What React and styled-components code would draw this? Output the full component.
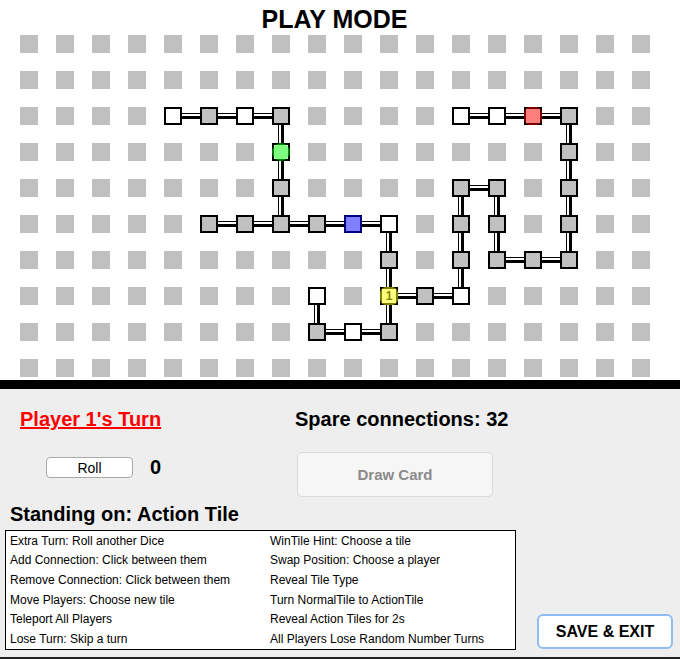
import React from 'react'
import styled, { createGlobalStyle } from 'styled-components'

const COLS = 18
const ROWS = 10

const WHITE = ['4,2', '6,2', '10,5', '8,7', '9,8', '12,7', '12,2', '13,2', '7,3', '9,5', '10,7', '14,2']
const GRAY = [
    '5,2', '7,2', '7,4', '5,5', '6,5', '7,5', '8,5', '10,6', '11,7', '8,8', '10,8',
    '12,6', '12,5', '12,4', '13,4', '13,5', '13,6', '14,6', '15,6', '15,5', '15,4', '15,3', '15,2',
]
const H_LINKS = ['4,2', '5,2', '6,2', '5,5', '6,5', '7,5', '8,5', '9,5', '8,8', '9,8', '10,7', '11,7', '12,4', '13,6', '14,6', '12,2', '13,2', '14,2']
const V_LINKS = ['7,2', '7,3', '7,4', '10,5', '10,6', '10,7', '8,7', '12,4', '12,5', '12,6', '13,4', '13,5', '15,2', '15,3', '15,4', '15,5']

const TOKENS = {
    '7,3': { color: 'rgba(0,255,0,0.5)', radius: '50%' },
    '9,5': { color: 'rgba(0,0,255,0.5)', radius: '3px' },
    '10,7': { color: 'rgba(255,255,0,0.5)', radius: '6px', label: '1' },
    '14,2': { color: 'rgba(255,0,0,0.5)', radius: '6px' },
}

const CARDS_LEFT = [
    'Extra Turn: Roll another Dice',
    'Add Connection: Click between them',
    'Remove Connection: Click between them',
    'Move Players: Choose new tile',
    'Teleport All Players',
    'Lose Turn: Skip a turn',
]
const CARDS_RIGHT = [
    'WinTile Hint: Choose a tile',
    'Swap Position: Choose a player',
    'Reveal Tile Type',
    'Turn NormalTile to ActionTile',
    'Reveal Action Tiles for 2s',
    'All Players Lose Random Number Turns',
]

const kindOf = (key) => {
    if (WHITE.includes(key)) return 'white'
    if (GRAY.includes(key)) return 'gray'
    return 'empty'
}

const App = () => {
    const cells = []
    for (let r = 0; r < ROWS; r++) {
        for (let c = 0; c < COLS; c++) {
            const key = `${c},${r}`
            const token = TOKENS[key]
            cells.push(
                <Cell key={key}>
                    <Tile $kind={kindOf(key)}>
                        {token && token.label && <TileLabel>{token.label}</TileLabel>}
                        {token && <Token $color={token.color} $radius={token.radius} />}
                    </Tile>
                    {H_LINKS.includes(key) ? <HLink /> : <span />}
                    {V_LINKS.includes(key) ? <VLink /> : <span />}
                </Cell>
            )
        }
    }

    return (
        <Page>
            <GlobalStyle />
            <Board>
                <Title>PLAY MODE</Title>
                <Grid>{cells}</Grid>
            </Board>
            <Panel>
                <TopGrid>
                    <Turn>Player 1's Turn</Turn>
                    <Spare>Spare connections: 32</Spare>
                    <RollRow>
                        <RollButton>Roll</RollButton>
                        <Dice>0</Dice>
                    </RollRow>
                    <DrawButton disabled>Draw Card</DrawButton>
                </TopGrid>
                <Standing>Standing on: Action Tile</Standing>
                <BottomRow>
                    <CardBox>
                        {CARDS_LEFT.map((text, i) => (
                            <React.Fragment key={text}>
                                <CardText>{text}</CardText>
                                <CardText>{CARDS_RIGHT[i]}</CardText>
                            </React.Fragment>
                        ))}
                    </CardBox>
                    <SaveButton>SAVE &amp; EXIT</SaveButton>
                </BottomRow>
            </Panel>
        </Page>
    )
}

const GlobalStyle = createGlobalStyle`
    html, body {
        margin: 0;
        padding: 0;
        background: #fff;
    }
    body {
        font-family: "Liberation Sans", Arial, sans-serif;
        color: #000;
    }
`
const Page = styled.div`
    width: 680px;
    height: 659px;
    display: flex;
    flex-direction: column;
    overflow: hidden;
`
const Board = styled.section`
    height: 389px;
    box-sizing: border-box;
    border-bottom: 9px solid #000;
    overflow: hidden;
    display: flex;
    flex-direction: column;
`
const Title = styled.h1`
    margin: 0;
    padding-top: 3px;
    padding-right: 11px;
    height: 32px;
    line-height: 32px;
    font-size: 25px;
    font-weight: 700;
    text-align: center;
`
const Grid = styled.div`
    display: grid;
    grid-template-columns: repeat(${COLS}, 36px);
    grid-auto-rows: 36px;
    padding-left: 20px;
`
const Cell = styled.div`
    display: grid;
    grid-template-columns: 18px 18px;
    grid-template-rows: 18px 18px;
`
const Tile = styled.div`
    position: relative;
    box-sizing: border-box;
    width: 18px;
    height: 18px;
    background: ${p => (p.$kind === 'white' ? '#fff' : '#c0c0c0')};
    border: ${p => (p.$kind === 'empty' ? 'none' : '2px solid #000')};
    z-index: 1;
`
const TileLabel = styled.span`
    position: absolute;
    inset: 0;
    display: flex;
    align-items: center;
    justify-content: center;
    font-size: 12px;
    font-weight: 700;
    color: #000;
`
const Token = styled.div`
    position: absolute;
    left: -2px;
    top: -2px;
    width: 18px;
    height: 18px;
    border-radius: ${p => p.$radius};
    background: ${p => p.$color};
`
const HLink = styled.div`
    background: linear-gradient(to bottom,
        transparent 0 6px, #000 6px 7px, #fff 7px 9px, #000 9px 12px, transparent 12px);
`
const VLink = styled.div`
    grid-column: 1;
    background: linear-gradient(to right,
        transparent 0 6px, #000 6px 7px, #fff 7px 9px, #000 9px 12px, transparent 12px);
`
const Panel = styled.section`
    flex: 1;
    background: #eeeeee;
    border-bottom: 2px solid #222;
    padding-top: 19px;
    display: flex;
    flex-direction: column;
`
const TopGrid = styled.div`
    display: grid;
    grid-template-columns: 275px 1fr;
    grid-template-rows: 22px 45px;
    row-gap: 22px;
    padding-left: 20px;
    align-items: start;
`
const Turn = styled.div`
    font-size: 20px;
    line-height: 22px;
    font-weight: 700;
    color: #ff0000;
    text-decoration: underline;
`
const Spare = styled.div`
    font-size: 20px;
    line-height: 22px;
    font-weight: 700;
`
const RollRow = styled.div`
    display: flex;
    align-items: center;
    gap: 17px;
    margin-left: 26px;
    margin-top: 4px;
`
const RollButton = styled.button`
    width: 87px;
    height: 21px;
    padding: 0;
    background: #fff;
    border: 1px solid #a8a8a8;
    border-radius: 4px;
    font-family: "Liberation Sans", Arial, sans-serif;
    font-size: 14px;
    color: #000;
`
const Dice = styled.span`
    font-size: 20px;
    font-weight: 700;
`
const DrawButton = styled.button`
    width: 196px;
    height: 45px;
    margin-left: 2px;
    background: #f6f6f6;
    border: 1px solid #d9d9d9;
    border-radius: 5px;
    font-family: "Liberation Sans", Arial, sans-serif;
    font-size: 15px;
    font-weight: 700;
    color: #8a8a8a;
`
const Standing = styled.h2`
    margin: 5px 0 0 10px;
    font-size: 20px;
    line-height: 24px;
    font-weight: 700;
`
const BottomRow = styled.div`
    display: flex;
    align-items: flex-end;
    justify-content: space-between;
    margin-top: 4px;
    padding: 0 7px 0 5px;
`
const CardBox = styled.div`
    box-sizing: border-box;
    width: 511px;
    height: 120px;
    border: 1px solid #000;
    background: #fff;
    padding-left: 4px;
    display: grid;
    grid-template-columns: 260px 1fr;
    grid-template-rows: repeat(6, 1fr);
    align-items: center;
`
const CardText = styled.div`
    font-size: 12px;
    white-space: nowrap;
`
const SaveButton = styled.button`
    width: 136px;
    height: 35px;
    margin-bottom: 1px;
    background: #fff;
    border: 2px solid #8fbdf3;
    border-radius: 6px;
    font-family: "Liberation Sans", Arial, sans-serif;
    font-size: 16px;
    font-weight: 700;
    color: #000;
`

export default App
